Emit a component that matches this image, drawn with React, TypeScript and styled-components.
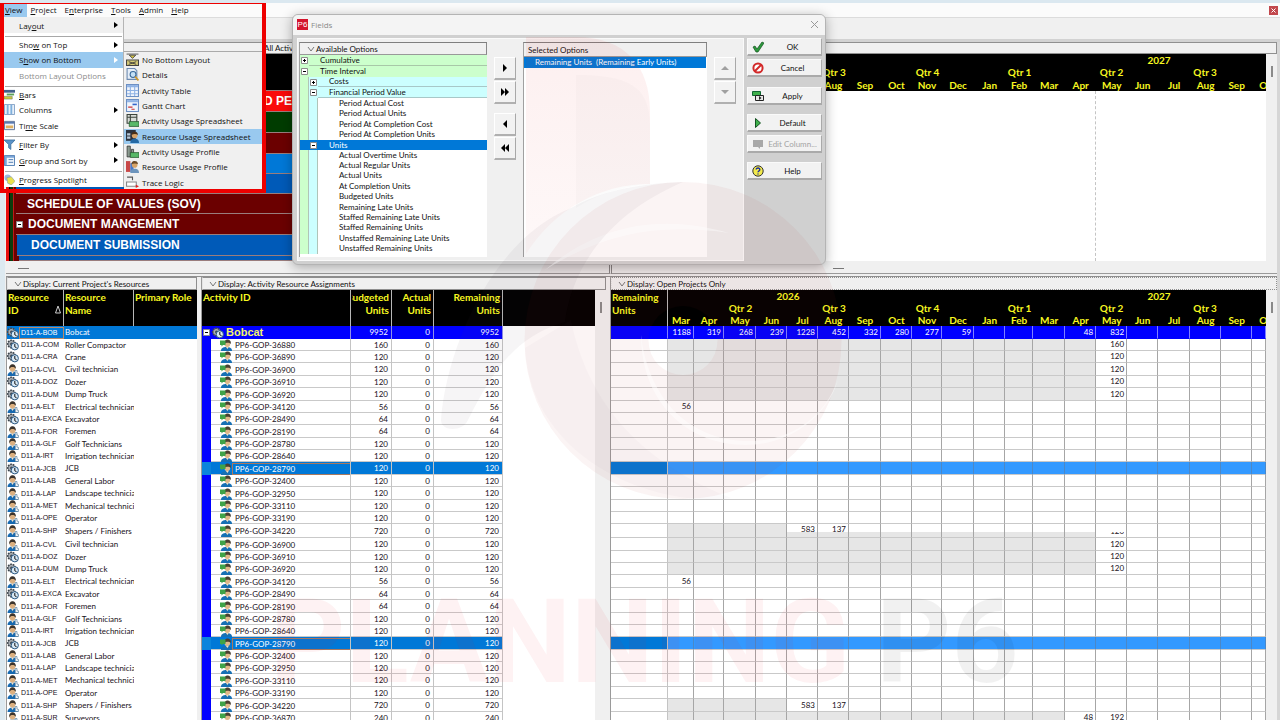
import React from 'react';
import styled, { createGlobalStyle, css } from 'styled-components';

const small = "Lato, 'Liberation Sans', sans-serif";
const ui = "'Open Sans', sans-serif";

const GlobalStyle = createGlobalStyle`
  * { box-sizing: border-box; }
  body { margin: 0; background: #f0f0f0; font-family: ${small}; font-size: 8px; color: #111; overflow: hidden; }
  button { font: inherit; color: inherit; border: 0; margin: 0; padding: 0; background: none; text-align: left; }
  ul { list-style: none; margin: 0; padding: 0; }
  table { border-collapse: separate; border-spacing: 0; table-layout: fixed; }
  th, td { padding: 0; }
  svg { display: block; flex: none; }
`;

/* ---------- window shell ---------- */

const Shell = styled.div`
  position: relative;
  display: flex;
  flex-direction: column;
  height: 100vh;
  overflow: hidden;
  border-top: 3px solid #dbe8f0;
`;

const MenuBar = styled.nav`
  display: flex;
  align-items: center;
  height: 15px;
  padding: 0 2px 0 4px;
  background: #fbfbfb;
  border-bottom: 1px solid #dcdcdc;
  font-family: ${ui};
  font-size: 8px;
  color: #111;
`;

const MenuTitle = styled.button<{ $open?: boolean }>`
  height: 14px;
  padding: 0 4px 1px 1px;
  margin-right: 3px;
  background: ${p => (p.$open ? '#99c9ef' : 'transparent')};
`;

const CloseSmall = styled.button`
  display: grid;
  place-items: center;
  width: 9px;
  height: 9px;
  margin-left: auto;
  background: #c2484d;
`;

const Toolbar = styled.div`
  flex: none;
  height: 24px;
  background: #f0f0f0;
  border-bottom: 3px solid #d2d2d2;
`;

const Work = styled.main`
  flex: 1;
  min-height: 0;
  display: flex;
  flex-direction: column;
  border-left: 5px solid #dde9f0;
  border-right: 3px solid #d6d6d6;
  padding-left: 1px;
`;

const PaneTitle = styled.div<{ $short?: boolean; $focus?: boolean }>`
  flex: none;
  display: flex;
  align-items: center;
  gap: 1px;
  height: ${p => (p.$short ? 12 : 13)}px;
  padding-left: 6px;
  background: #f0f0f0;
  border: 1px ${p => (p.$focus ? 'dotted' : 'solid')} #8f8f8f;
  border-left-color: #e4e4e4;
  white-space: nowrap;
`;

const UpperTitle = styled(PaneTitle)`
  padding-left: 257px;
`;

const Upper = styled.section`
  flex: none;
  display: flex;
  height: 207px;
`;

const Lower = styled.section`
  flex: 1;
  min-height: 0;
  display: flex;
  gap: 4px;
`;

const Splitter = styled.div`
  flex: none;
  display: flex;
  height: 16px;
  border-bottom: 1px solid #8f8f8f;
`;

const SplitLeft = styled.div`
  width: 606px;
  height: 13px;
  padding: 7px 0 0 12px;
  border-right: 3px double #888;
  border-bottom: 1px solid #9a9a9a;
`;

const SplitRight = styled.div`
  flex: 1;
  height: 13px;
  padding: 7px 0 0 221px;
  border-bottom: 1px solid #9a9a9a;
`;

const HThumb = styled.div`
  width: 11px;
  height: 1px;
  background: #777;
`;

const VScroll = styled.div`
  flex: none;
  width: 11px;
  padding: 12px 0 0 5px;
  background: #f0f0f0;
`;

const VThumb = styled.div`
  width: 2px;
  height: 11px;
  background: #8a8a8a;
`;

/* ---------- WBS bands ---------- */

const Wbs = styled.div`
  width: 601px;
  margin-right: 4px;
  display: flex;
  border-right: 1px solid #888;
`;

const Stripe = styled.div<{ $w: number; $c: string }>`
  flex: none;
  width: ${p => p.$w}px;
  background: ${p => p.$c};
`;

const Bands = styled.div`
  flex: 1;
  background: #6b0000;
`;

const Band = styled.div<{ $c: string; $h?: number; $indent?: number; $pad?: number }>`
  display: flex;
  align-items: center;
  gap: 5px;
  height: ${p => p.$h ?? 20}px;
  margin-left: ${p => p.$indent ?? 0}px;
  padding-left: ${p => p.$pad ?? 0}px;
  background: ${p => p.$c};
  border-bottom: 1px solid #9a7d7d;
  color: #fff;
  font: bold 12px/18px 'Liberation Sans', sans-serif;
  white-space: nowrap;
  overflow: hidden;
`;

/* ---------- tables ---------- */

const HeadCell = styled.th<{ $right?: boolean; $line?: boolean }>`
  height: 36px;
  padding: 1px 2px 0 1px;
  vertical-align: top;
  background: #000;
  color: #f8f820;
  font: bold 10px/13px ${small};
  text-align: ${p => (p.$right ? 'right' : 'left')};
  border-right: ${p => (p.$line === false ? 0 : 1)}px solid #b8b8b8;
  overflow: hidden;
`;

const HeadLines = styled.div<{ $right?: boolean }>`
  display: flex;
  flex-direction: column;
  align-items: ${p => (p.$right ? 'flex-end' : 'flex-start')};
  overflow: hidden;
  white-space: nowrap;
  span { display: flex; width: 100%; justify-content: ${p => (p.$right ? 'flex-end' : 'space-between')}; }
`;

const Row = styled.tr`
  height: 12px;
  &:nth-child(8n + 1), &:nth-child(8n + 4), &:nth-child(8n + 6) { height: 13px; }
  &:nth-child(17) { height: 14px; }
`;

const cell = css`
  line-height: 11px;
  white-space: nowrap;
  overflow: hidden;
`;

const ResCell = styled.td<{ $sel?: boolean }>`
  ${cell}
  background: ${p => (p.$sel ? '#0078d7' : '#fff')};
  color: ${p => (p.$sel ? '#fff' : '#181020')};
`;

const IdBox = styled.div<{ $focus?: boolean }>`
  display: flex;
  align-items: center;
  height: 12px;
  span {
    flex: 1;
    font: 7px/10px 'Liberation Sans', sans-serif;
    padding-left: 1px;
    border: 1px solid ${p => (p.$focus ? '#b98a6a' : 'transparent')};
    border-right-width: ${p => (p.$focus ? 1 : 0)}px;
  }
`;

const NameBox = styled.div`
  width: 70px;
  padding-left: 1px;
  overflow: hidden;
`;

const ActCell = styled.td<{ $tone?: 'sel' | 'group'; $first?: boolean }>`
  ${cell}
  text-align: ${p => (p.$first ? 'left' : 'right')};
  padding-right: ${p => (p.$first ? 0 : 3)}px;
  background: ${p => (p.$tone === 'sel' ? '#0078d7' : p.$tone === 'group' ? '#0000ff' : '#fff')};
  color: ${p => (p.$tone ? '#fff' : '#181020')};
  box-shadow: inset 0 -1px ${p => (p.$tone === 'group' ? '#0000ff' : '#c9c9c9')};
  border-left: ${p => (p.$first && p.$tone !== 'group' ? 9 : 0)}px solid ${p => (p.$tone === 'sel' ? '#0a84dc' : '#0000ff')};
  border-right: 1px solid ${p => (p.$tone === 'group' ? '#8f8fe8' : '#c4c4c4')};
`;

const ActBox = styled.div<{ $tone?: 'sel' | 'group' }>`
  display: flex;
  align-items: center;
  height: 11px;
  padding-left: ${p => (p.$tone === 'group' ? 1 : 9)}px;
  gap: ${p => (p.$tone === 'group' ? 2 : 1)}px;
  span { flex: 1; line-height: 10px; outline: ${p => (p.$tone === 'sel' ? '1px solid #a8795f' : 'none')}; padding-left: 2px; }
  b { font: bold 11px/11px 'Liberation Sans', sans-serif; color: #f4f46a; }
`;

const Pane = styled.div<{ $w?: number }>`
  flex: ${p => (p.$w ? 'none' : '1')};
  width: ${p => (p.$w ? `${p.$w}px` : 'auto')};
  min-width: 0;
  display: flex;
  flex-direction: column;
  background: #f0f0f0;
  border-left: 1px solid #9a9a9a;
`;

const PaneBody = styled.div`
  flex: 1;
  min-height: 0;
  display: flex;
  overflow: hidden;
`;

const White = styled.div`
  flex: 1;
  min-width: 0;
  background: #fff;
  overflow: hidden;
`;

const FullTable = styled.table`
  width: 100%;
`;

const BlackFill = styled.td`
  background: #000;
`;

/* ---------- timescale ---------- */

const ScaleCell = styled.th<{ $shift?: number; $tall?: boolean; $clip?: boolean }>`
  height: ${p => (p.$tall ? 13 : 12)}px;
  background: #000;
  color: #f8f820;
  font: bold 10px/12px ${small};
  text-align: ${p => (p.$clip ? 'left' : 'center')};
  padding-left: ${p => (p.$clip ? 7 : Math.max(p.$shift ?? 0, 0))}px;
  padding-right: ${p => Math.max(-(p.$shift ?? 0), 0)}px;
  overflow: hidden;
  white-space: nowrap;
`;

const Slot = styled.td<{ $bg?: string; $line?: string; $group?: boolean; $open?: boolean }>`
  ${cell}
  text-align: right;
  padding-right: 2px;
  background: ${p => p.$bg ?? '#fff'};
  color: ${p => (p.$group ? '#fff' : '#181020')};
  border-right: 1px solid ${p => p.$line ?? '#a6a6a6'};
  border-bottom: ${p => (p.$open ? 0 : 1)}px solid ${p => (p.$group ? '#0000ff' : '#c9c9c9')};
`;

const CutTop = styled.div`
  height: 8px;
  overflow: hidden;
`;

const CutBottom = styled.div`
  display: flex;
  align-items: flex-end;
  justify-content: flex-end;
  height: 5px;
  overflow: hidden;
`;

const CutRow = styled.tr<{ $h: number }>`
  height: ${p => p.$h}px;
`;

const Chart = styled.td<{ $today?: boolean }>`
  height: 170px;
  background: #fff;
  border-right: ${p => (p.$today ? '1px dashed #c4c4c4' : '0')};
`;

/* ---------- icons ---------- */

const Chevron = () => (
  <svg width="8" height="6" viewBox="0 0 8 6"><path d="M1 1l3 4 3-4" fill="none" stroke="#777" /></svg>
);
const Toggle = ({ open }: { open?: boolean }) => (
  <svg width="7" height="7" viewBox="0 0 7 7">
    <path d="M.5.5h6v6h-6z" fill="#fff" stroke="#8c8c8c" />
    <path d={open ? 'M2 3.5h3' : 'M2 3.5h3M3.5 2v3'} stroke="#000" />
  </svg>
);
const Labor = () => (
  <svg width="12" height="12" viewBox="0 0 12 12">
    <path d="M.5 12c0-3 2-4.500 5-4.500s5.500 1.500 5.500 4.500z" fill="#1769b0" />
    <path d="M4 7.500L5.500 10 7 7.500z" fill="#f4e4c8" />
    <circle cx="5.500" cy="4.500" r="2.900" fill="#dcb080" />
    <path d="M2.200 5.500C1.800 1.500 4 .2 5.500.2S9.200 1.400 8.900 5C8 3.500 7 3 5.500 3 4 3 3 3.500 2.200 5.500z" fill="#3c342c" />
    <path d="M8.200 6.500v5h3.300v-2l-1.500-.5V6.500z" fill="#eef3f8" stroke="#47708e" strokeWidth=".6" />
  </svg>
);
const Machine = () => (
  <svg width="12" height="12" viewBox="0 0 12 12">
    <circle cx="4.500" cy="5" r="3.700" fill="#a8aeb4" stroke="#3d454c" strokeWidth="1.600" strokeDasharray="1.800 .8" />
    <circle cx="4.500" cy="5" r="1.500" fill="#454d56" />
    <circle cx="7.800" cy="7.300" r="3.600" fill="#d8e8f4" stroke="#2c5a84" />
    <path d="M7.800 5v2.800l1.800 1" fill="none" stroke="#111" />
  </svg>
);
const Assign = () => (
  <svg width="12" height="12" viewBox="0 0 12 12">
    <path d="M1 12c0-3 2-4 5.500-4S12 9 12 12z" fill="#1670b4" />
    <path d="M5.500 7.500L7.500 10l1.500-2.500z" fill="#f0e0c0" />
    <circle cx="7.300" cy="5" r="2.900" fill="#e0b88a" />
    <path d="M4.300 5C4.300 1.200 6 .5 7.500.5s3.800 1 3.300 4.500C9.500 3.500 6.500 3 4.300 5z" fill="#4a4030" />
    <path d="M0 1.500h5.500V6H3L1.500 7.500V6H0z" fill="#3fa348" />
  </svg>
);
const Arrow = ({ c = '#000' }: { c?: string }) => (
  <svg width="4" height="6" viewBox="0 0 4 6"><path d="M0 0l4 3-4 3z" fill={c} /></svg>
);

const iconArt: Record<string, React.ReactNode> = {
  bars: <><path d="M0 1h12v3H0z" fill="#44608a" /><path d="M3 5h8v2H3z" fill="#5aa05a" /><path d="M0 8h9v3H0z" fill="#c8c83c" stroke="#666" strokeWidth=".5" /></>,
  columns: <><path d="M.5.5h11v11H.5z" fill="#e8f0fa" stroke="#7f9fc4" /><path d="M3 1h2v10H3zM7 1h2v10H7z" fill="#7fb0dc" /></>,
  time: <><path d="M.5 1.500h11v9H.5z" fill="#f2f4f8" stroke="#5a6f94" /><path d="M1 2h10v2H1z" fill="#5a7ab0" /><path d="M2 6h8v3H2z" fill="#e0b060" /></>,
  filter: <path d="M0 1h12L7.500 6v5.500L5 9.500V6z" fill="#5b93c8" stroke="#2e608f" strokeWidth=".7" />,
  group: <><path d="M.5.5h11v11H.5z" fill="#eef4fb" stroke="#4a78b0" /><path d="M1 1h10v2H1zM1 3h2v8H1z" fill="#78a4d8" /><path d="M5 5h5M5 8h5" stroke="#4a78b0" /></>,
  spot: <><circle cx="4" cy="4" r="3.500" fill="#9ab8dc" /><path d="M3 4l5-1 4 5-4 4-4-2z" fill="#e8e04c" stroke="#7a90a8" strokeWidth=".6" /></>,
  none: <><path d="M.5 1h11" stroke="#666" /><path d="M3 2h6L6 5z" stroke="#444" fill="#d0c040" strokeWidth=".8" /><path d="M.5 6.500h11v5H.5z" fill="#d8cc78" stroke="#444" /><path d="M2.500 8l7 2.500M9.500 8l-7 2.500" stroke="#333" strokeWidth=".8" /></>,
  details: <><path d="M1 .5h7l2 2v8H1z" fill="#e6eef8" stroke="#6c8ab0" /><circle cx="6.500" cy="6" r="2.700" fill="#c4e0f6" stroke="#3a6a9c" /><path d="M8.500 8l3 3.500" stroke="#d0982c" strokeWidth="1.600" /></>,
  table: <><path d="M.5.5h11v11H.5z" fill="#f0f5fc" stroke="#6d90c4" /><path d="M1 1h10v2H1z" fill="#8fb2e4" /><path d="M4 1v10M8 1v10M1 6h10M1 9h10" stroke="#8fb2e4" /></>,
  gantt: <><path d="M.5.5h11v11H.5z" fill="#f0f5fc" stroke="#6d90c4" /><path d="M1 1h10v2H1z" fill="#8fb2e4" /><path d="M6 5h4" stroke="#3366cc" strokeWidth="1.500" /><path d="M2 7.500h4M5 9.500h3" stroke="#c33" /></>,
  actsheet: <><path d="M1 .5h9v8H1z" fill="#d8dcd8" stroke="#3c443c" /><path d="M1 3h9M4 .5v8" stroke="#3c443c" /><path d="M3 7h9v4.500H3z" fill="#58b868" stroke="#285830" strokeWidth=".7" /></>,
  ressheet: <><path d="M0 0h9v10H0z" fill="#2c3440" /><path d="M1 3h3v2H1zM1 6h3v2H1z" fill="#b8c8d8" /><circle cx="8" cy="5" r="2.600" fill="#d8a468" /><path d="M5 4.500C5 2 7 1.500 8 1.500s3 .5 3 3C9.500 3.500 7 3.500 5 4.500z" fill="#4a3018" /><path d="M4 12c0-3 1.500-4 4-4s4 1 4 4z" fill="#2468a4" /></>,
  actprof: <><path d="M1 1h3v10H1zM5 4h2v5H5z" fill="#8a9a90" stroke="#333" strokeWidth=".7" /><path d="M4 7h8v4.500H4z" fill="#58b868" stroke="#285830" strokeWidth=".7" /></>,
  resprof: <><path d="M0 1h4v10H0z" fill="#c84848" /><path d="M4 3h3v8H4z" fill="#4878c8" /><circle cx="8" cy="4.500" r="2.600" fill="#d8a468" /><path d="M5 4C5 1.500 7 1 8 1s3 .5 3 3C9.500 3 7 3 5 4z" fill="#6a4a28" /><path d="M4 12c0-3 1.500-4 4-4s4 1 4 4z" fill="#6c94bc" /></>,
  trace: <><path d="M1 1h5v3" fill="none" stroke="#555" /><path d="M.5 5.500h9v4h-9z" fill="#fff" stroke="#888" /><path d="M9 8l3 1.500L9 11z" fill="#d22" /></>,
  ok: <path d="M1 6l2-1 2 3 5-7 2 1-6 9H4z" fill="#2c9a3c" stroke="#155020" strokeWidth=".7" />,
  cancel: <><circle cx="6" cy="6" r="4.600" fill="#fff" stroke="#d22828" strokeWidth="2" /><path d="M3 9l6-6" stroke="#d22828" strokeWidth="2" /></>,
  apply: <><path d="M.5 1.500h8v4h-8z" fill="#3fb04c" stroke="#163" /><path d="M3.500 5.500h8v5h-8z" fill="#e8e8e8" stroke="#222" /><path d="M7 6l2.500 2L7 10z" fill="#222" /></>,
  default: <path d="M3.500 1.500L8.500 6l-5 4.500z" fill="#3fb04c" stroke="#145222" />,
  edit: <path d="M1 2h10v7H8v2L6 9H1z" fill="#a8a8a8" />,
  help: <><circle cx="6" cy="6" r="5.200" fill="#f2ea4c" stroke="#333" /><path d="M4.200 4.600C4.200 2.400 8 2.500 7.800 4.700 7.700 6 6 6 6 7.300M6 8.500v1" fill="none" stroke="#1c2ca0" strokeWidth="1.400" /></>,
};
const Icon = ({ name, size = 12 }: { name: string; size?: number }) => (
  <svg width={size} height={size} viewBox="0 0 12 12">{iconArt[name]}</svg>
);

/* ---------- menus ---------- */

const Drop = styled.div`
  position: absolute;
  z-index: 4;
  left: 4px;
  top: 14px;
  width: 120px;
  background: #fff;
  border-right: 1px solid #b4b4b4;
  font-family: ${ui};
  font-size: 8px;
  color: #111;
`;

const Fly = styled(Drop)`
  left: 124px;
  top: 48px;
  width: 138px;
  height: 139px;
  overflow: hidden;
  background: #f0f0f0;
  border: 0;
  border-top: 1px solid #aaa;
`;

const Group = styled.ul<{ $h: number; $shade?: boolean }>`
  display: grid;
  grid-auto-rows: 1fr;
  height: ${p => p.$h}px;
  background: ${p => (p.$shade ? '#f0f0f0' : 'transparent')};
  & + & { margin-top: 4px; box-shadow: 0 -2px 0 -1px #a8a8a8; }
`;

const Item = styled.button<{ $hot?: boolean; $off?: boolean }>`
  display: flex;
  align-items: center;
  width: 100%;
  height: 100%;
  padding-right: 5px;
  background: ${p => (p.$hot ? '#99c9ef' : 'transparent')};
  color: ${p => (p.$off ? '#8c8c8c' : 'inherit')};
  white-space: nowrap;
`;

const Gutter = styled.span<{ $w: number }>`
  display: flex;
  width: ${p => p.$w}px;
  flex: none;
`;

const Label = styled.span`
  flex: 1;
`;

const RedFrame = styled.div`
  position: absolute;
  z-index: 5;
  left: 0;
  top: -3px;
  width: 266px;
  height: 193px;
  border: 4px solid #ee0000;
  pointer-events: none;
`;

type MenuEntry = { t: React.ReactNode; icon?: string; sub?: boolean; hot?: boolean; off?: boolean };
const menu: { h: number; shade?: boolean; items: MenuEntry[] }[] = [
  { h: 16, shade: true, items: [{ t: <>Lay<u>o</u>ut</>, sub: true }] },
  { h: 46, items: [{ t: <>Sho<u>w</u> on Top</>, sub: true }, { t: <>S<u>h</u>ow on Bottom</>, sub: true, hot: true }, { t: 'Bottom Layout Options', off: true }] },
  { h: 46, items: [{ t: <><u>B</u>ars</>, icon: 'bars' }, { t: 'Columns', icon: 'columns', sub: true }, { t: <>Ti<u>m</u>e Scale</>, icon: 'time' }] },
  { h: 31, items: [{ t: <><u>F</u>ilter By</>, icon: 'filter', sub: true }, { t: <><u>G</u>roup and Sort by</>, icon: 'group', sub: true }] },
  { h: 15, items: [{ t: <><u>P</u>rogress Spotlight</>, icon: 'spot' }] },
];
const flyout: MenuEntry[] = [
  { t: 'No Bottom Layout', icon: 'none' }, { t: 'Details', icon: 'details' }, { t: 'Activity Table', icon: 'table' },
  { t: 'Gantt Chart', icon: 'gantt' }, { t: 'Activity Usage Spreadsheet', icon: 'actsheet' },
  { t: 'Resource Usage Spreadsheet', icon: 'ressheet', hot: true }, { t: 'Activity Usage Profile', icon: 'actprof' },
  { t: 'Resource Usage Profile', icon: 'resprof' }, { t: 'Trace Logic', icon: 'trace' },
];

/* ---------- dialog ---------- */

const Dialog = styled.div`
  position: absolute;
  z-index: 2;
  left: 292px;
  top: 11px;
  width: 534px;
  height: 251px;
  display: flex;
  flex-direction: column;
  background: #d0d0d0;
  border: 1px solid #b4b4b4;
  border-radius: 6px;
  box-shadow: 0 2px 12px rgba(0, 0, 0, 0.3);
  overflow: hidden;
`;

const DialogTitle = styled.header`
  flex: none;
  display: flex;
  align-items: center;
  gap: 3px;
  height: 20px;
  padding: 0 6px 1px 4px;
  background: #f4f4f4;
  color: #8a8a8a;
  font-family: ${ui};
  font-size: 8px;
`;

const Badge = styled.span`
  width: 11px;
  height: 11px;
  background: #d4142c;
  color: #fff;
  font: 8px/11px 'Liberation Sans', sans-serif;
  text-align: center;
`;

const CloseButton = styled.button`
  margin-left: auto;
`;

const DialogBody = styled.div`
  flex: 1;
  display: flex;
  gap: 3px;
  padding: 3px 3px 3px 4px;
`;

const Picker = styled.div`
  flex: 1;
  display: flex;
  gap: 7px;
  padding: 3px 7px 3px 1px;
  background: #f0f0f0;
  border: 1px solid #fafafa;
`;

const List = styled.div<{ $w: number }>`
  width: ${p => p.$w}px;
  background: #fff;
  border-top: 1px solid #7f7f7f;
  border-left: 1px solid #a0a0a0;
`;

const ListHead = styled.div<{ $h: number }>`
  display: flex;
  align-items: center;
  gap: 1px;
  height: ${p => p.$h}px;
  padding-left: ${p => (p.$h > 12 ? 4 : 7)}px;
  background: #f0f0f0;
  border-right: 1px solid #888;
  border-bottom: 1px solid #999;
`;

const TreeRow = styled.div<{ $h?: number; $bg?: string; $sel?: boolean }>`
  display: flex;
  height: ${p => (p.$h ? `${p.$h}px` : 'auto')};
  color: ${p => (p.$sel ? '#fff' : 'inherit')};
  background: ${p => p.$bg ?? 'transparent'};
  white-space: nowrap;
`;

const Rail = styled.span<{ $c: string; $line?: boolean }>`
  flex: none;
  display: grid;
  place-items: center;
  width: 9px;
  background: ${p => p.$c};
  border-right: ${p => (p.$line ? 1 : 0)}px solid #b0c4b8;
`;

const TreeLabel = styled.span<{ $pad: number; $line?: string }>`
  flex: 1;
  display: flex;
  align-items: center;
  padding-left: ${p => p.$pad}px;
  line-height: 9px;
  border-bottom: ${p => (p.$line ? `1px solid ${p.$line}` : '0')};
`;

const Leaves = styled.div<{ $h: number }>`
  display: grid;
  grid-auto-rows: 1fr;
  height: ${p => p.$h}px;
`;

const Stack = styled.div`
  width: 22px;
  display: flex;
  flex-direction: column;
  gap: 1px;
  padding-top: 15px;
`;

const Key = styled.button<{ $after?: number }>`
  display: grid;
  place-items: center;
  width: 22px;
  height: 23px;
  margin-bottom: ${p => p.$after ?? 0}px;
  background: #f2f2f2;
  border: 1px solid #fff;
  border-right: 1px solid #a8a8a8;
  border-bottom: 2px solid #b0b0b0;
`;

const Chosen = styled.div`
  height: 11px;
  padding-left: 11px;
  margin-right: 1px;
  line-height: 11px;
  background: #0078d7;
  color: #fff;
  white-space: pre;
`;

const Actions = styled.div`
  width: 75px;
  display: flex;
  flex-direction: column;
`;

const Action = styled.button<{ $gap: number; $off?: boolean }>`
  display: flex;
  align-items: center;
  height: 18px;
  margin-bottom: ${p => p.$gap}px;
  padding: 0 0 0 4px;
  background: #f2f2f2;
  border: 1px solid #fafafa;
  border-right-color: #aaa;
  border-bottom: 2px solid #aaa;
  color: ${p => (p.$off ? '#a4a4a4' : '#111')};
  span { flex: 1; text-align: center; white-space: nowrap; }
`;

/* ---------- watermark ---------- */

const Watermark = styled.div`
  position: absolute;
  z-index: 3;
  inset: -3px 0 0 0;
  overflow: hidden;
  pointer-events: none;
`;

const Brand = styled.div`
  position: absolute;
  left: 270px;
  top: 567px;
  display: flex;
  gap: 26px;
  color: rgba(240, 20, 30, 0.055);
  font: bold 117px/150px Roboto, sans-serif;
  white-space: nowrap;
  span { color: rgba(0, 0, 0, 0.055); }
`;

/* ---------- data ---------- */

const months = ['Mar', 'Apr', 'May', 'Jun', 'Jul', 'Aug', 'Sep', 'Oct', 'Nov', 'Dec', 'Jan', 'Feb', 'Mar', 'Apr', 'May', 'Jun', 'Jul', 'Aug', 'Sep', 'Oct'];
const widths = [26, 30, 32, 31, 31, 31, 32, 31, 30, 32, 31, 28, 32, 31, 31, 31, 32, 31, 31];
const quarters: [string, number][] = [['', 1], ['Qtr 2', 3], ['Qtr 3', 3], ['Qtr 4', 3], ['Qtr 1', 3], ['Qtr 2', 3], ['Qtr 3', 3], ['', 1]];

type Res = [string, string, boolean?];
const people: Res[] = [
  ['CVL', 'Civil technician'], ['DOZ', 'Dozer', true], ['DUM', 'Dump Truck', true], ['ELT', 'Electrical technician'],
  ['EXCA', 'Excavator', true], ['FOR', 'Foremen'], ['GLF', 'Golf Technicians'], ['IRT', 'Irrigation technician'],
  ['JCB', 'JCB', true], ['LAB', 'General Labor'], ['LAP', 'Landscape technicia'], ['MET', 'Mechanical technici'],
  ['OPE', 'Operator'], ['SHP', 'Shapers / Finishers'],
];
const resources: Res[][] = [
  [['BOB', 'Bobcat', true], ['COM', 'Roller Compactor', true], ['CRA', 'Crane', true], ...people],
  [...people, ['SUR', 'Surveyors']],
];

type Usage = { id: string; units: number; at?: Record<number, number>; grey?: number; group?: boolean; cut?: boolean };
const common: Usage[] = [
  { id: '36900', units: 120, grey: 14, at: { 14: 120 } }, { id: '36910', units: 120, grey: 14, at: { 14: 120 } },
  { id: '36920', units: 120, grey: 14, at: { 14: 120 } }, { id: '34120', units: 56, at: { 0: 56 } },
  { id: '28490', units: 64 }, { id: '28190', units: 64 }, { id: '28780', units: 120 }, { id: '28640', units: 120 },
  { id: '28790', units: 120 }, { id: '32400', units: 120 }, { id: '32950', units: 120 }, { id: '33110', units: 120 },
  { id: '33190', units: 120 },
];
const shapers: Usage = { id: '34220', units: 720, grey: 4, at: { 4: 583, 5: 137 } };
const work: Usage[][] = [
  [
    { id: 'Bobcat', units: 9952, group: true, at: { 0: 1188, 1: 319, 2: 268, 3: 239, 4: 1228, 5: 452, 6: 332, 7: 280, 8: 277, 9: 59, 13: 48, 14: 832 } },
    { id: '36880', units: 160, grey: 14, at: { 14: 160 } }, { id: '36890', units: 120, grey: 14, at: { 14: 120 } },
    ...common, { ...shapers, cut: true },
  ],
  [...common, shapers, { id: '36870', units: 240, grey: 13, at: { 13: 48, 14: 192 } }],
];

const Timescale = ({ label }: { label?: boolean }) => (
  <>
    <colgroup>
      <col style={{ width: 57 }} />
      {widths.map((w, i) => <col key={i} style={{ width: w }} />)}
      <col />
    </colgroup>
    <thead>
      <tr>
        <HeadCell rowSpan={3} $line={!!label}>{label && <>Remaining<br />Units</>}</HeadCell>
        <ScaleCell colSpan={10} $shift={-66}>2026</ScaleCell>
        <ScaleCell colSpan={10} $shift={78}>2027</ScaleCell>
      </tr>
      <tr>{quarters.map(([q, n], i) => <ScaleCell key={i} colSpan={n}>{q}</ScaleCell>)}</tr>
      <tr>{months.map((m, i) => <ScaleCell key={i} $tall={!label} $clip={i === 19}>{m}</ScaleCell>)}</tr>
    </thead>
  </>
);

const UsageRow = ({ w }: { w: Usage }) => {
  const sel = w.id === '28790';
  const bg = (i: number, grey = w.grey ?? 0) => (w.group ? '#0000ff' : sel ? '#3399ff' : i < grey ? '#e6e6e6' : '#fff');
  const line = w.group ? '#8080ff' : sel ? '#4a88c8' : undefined;
  if (w.cut) {
    return (
      <>
        <CutRow $h={8}>
          <Slot $open $line="#c4c4c4" />
          {months.map((_, i) => <Slot key={i} $open $bg={bg(i)}><CutTop>{w.at?.[i]}</CutTop></Slot>)}
        </CutRow>
        <CutRow $h={6}>
          <Slot $line="#c4c4c4" />
          {months.map((_, i) => <Slot key={i} $bg={bg(i, 14)}><CutBottom>{i === 14 ? 120 : ''}</CutBottom></Slot>)}
        </CutRow>
      </>
    );
  }
  return (
    <Row>
      <Slot $bg={w.group ? '#0000ff' : sel ? '#0078d7' : '#fff'} $group={w.group} $line={w.group ? '#8080ff' : '#c4c4c4'} />
      {months.map((_, i) => <Slot key={i} $bg={bg(i)} $group={w.group} $line={line}>{w.at?.[i]}</Slot>)}
    </Row>
  );
};

const Leaf = ({ items, h }: { items: string[]; h: number }) => (
  <Leaves $h={h}>
    {items.map(t => (
      <TreeRow key={t}><Rail $c="#ccffcc" $line /><Rail $c="#ccffff" $line /><TreeLabel $pad={21}>{t}</TreeLabel></TreeRow>
    ))}
  </Leaves>
);

const Glyph = ({ d, c = '#000' }: { d: string; c?: string }) => (
  <svg width="10" height="10" viewBox="0 0 10 10"><path d={d} fill={c} /></svg>
);

export default function App() {
  return (
    <Shell>
      <GlobalStyle />
      <MenuBar>
        <MenuTitle $open><u>V</u>iew</MenuTitle>
        <MenuTitle><u>P</u>roject</MenuTitle>
        <MenuTitle>E<u>n</u>terprise</MenuTitle>
        <MenuTitle><u>T</u>ools</MenuTitle>
        <MenuTitle><u>A</u>dmin</MenuTitle>
        <MenuTitle><u>H</u>elp</MenuTitle>
        <CloseSmall aria-label="Close"><svg width="5" height="5" viewBox="0 0 5 5"><path d="M.5.5l4 4M4.500.5l-4 4" stroke="#fff" /></svg></CloseSmall>
      </MenuBar>
      <Toolbar />
      <Work>
        <UpperTitle $short>All Activities</UpperTitle>
        <Upper>
          <Wbs>
            <Stripe $w={3} $c="#e81010" /><Stripe $w={1} $c="#000" /><Stripe $w={3} $c="#0c3c0c" /><Stripe $w={1} $c="#c01818" /><Stripe $w={2} $c="#6b0000" />
            <Bands>
              <Band $c="#000" $h={37} />
              <Band $c="#fa0a0a" $h={21} $pad={248}>D PE</Band>
              <Band $c="#003c00" $h={21} />
              <Band $c="#6b0000" $h={21} />
              <Band $c="#0078d7" />
              <Band $c="#005ab8" />
              <Band $c="#6b0000" $pad={11}>SCHEDULE OF VALUES (SOV)</Band>
              <Band $c="#6b0000" $h={21} $pad={-1}><Toggle open />DOCUMENT MANGEMENT</Band>
              <Band $c="#005ab8" $h={21} $indent={1} $pad={14}>DOCUMENT SUBMISSION</Band>
              <Band $c="#005ab8" $h={5} $indent={3} />
            </Bands>
          </Wbs>
          <White>
            <FullTable>
              <Timescale />
              <tbody><tr><Chart />{months.map((_, i) => <Chart key={i} $today={i === 13} />)}</tr></tbody>
            </FullTable>
          </White>
          <VScroll><VThumb /></VScroll>
        </Upper>
        <Splitter>
          <SplitLeft><HThumb /></SplitLeft>
          <SplitRight><HThumb /></SplitRight>
        </Splitter>
        <Lower>
          <Pane $w={191}>
            <PaneTitle><Chevron />Display: Current Project's Resources</PaneTitle>
            <PaneBody>
              <White>
                <FullTable>
                  <colgroup><col style={{ width: 57 }} /><col style={{ width: 70 }} /><col /></colgroup>
                  <thead>
                    <tr>
                      <HeadCell><HeadLines>Resource<span>ID<svg width="6" height="10" viewBox="0 0 6 10"><path d="M3 2l2.500 7h-5z" fill="none" stroke="#ccc" /></svg></span></HeadLines></HeadCell>
                      <HeadCell>Resource<br />Name</HeadCell>
                      <HeadCell $line={false}><HeadLines>Primary Role</HeadLines></HeadCell>
                    </tr>
                  </thead>
                  {resources.map((block, b) => (
                    <tbody key={b}>
                      {block.map(([id, name, machine]) => {
                        const sel = id === 'BOB';
                        return (
                          <Row key={id}>
                            <ResCell $sel={sel}><IdBox $focus={sel}>{machine ? <Machine /> : <Labor />}<span>D11-A-{id}</span></IdBox></ResCell>
                            <ResCell $sel={sel}><NameBox>{name}</NameBox></ResCell>
                            <ResCell $sel={sel} />
                          </Row>
                        );
                      })}
                    </tbody>
                  ))}
                </FullTable>
              </White>
            </PaneBody>
          </Pane>
          <Pane $w={405}>
            <PaneTitle><Chevron />Display: Activity Resource Assignments</PaneTitle>
            <PaneBody>
              <White>
                <FullTable>
                  <colgroup><col style={{ width: 149 }} /><col style={{ width: 41 }} /><col style={{ width: 42 }} /><col style={{ width: 69 }} /><col /></colgroup>
                  <thead>
                    <tr>
                      <HeadCell>Activity ID</HeadCell>
                      <HeadCell><HeadLines $right><span>Budgeted</span><span>Units</span></HeadLines></HeadCell>
                      <HeadCell $right>Actual<br />Units</HeadCell>
                      <HeadCell $right>Remaining<br />Units</HeadCell>
                      <BlackFill />
                    </tr>
                  </thead>
                  {work.map((block, b) => (
                    <tbody key={b}>
                      {block.map(w => {
                        const tone = w.group ? 'group' : w.id === '28790' ? 'sel' : undefined;
                        return (
                          <Row key={w.id}>
                            <ActCell $tone={tone} $first>
                              {w.group
                                ? <ActBox $tone="group"><Toggle open /><Machine /><b>{w.id}</b></ActBox>
                                : <ActBox $tone={tone}><Assign /><span>PP6-GOP-{w.id}</span></ActBox>}
                            </ActCell>
                            <ActCell $tone={tone}>{w.units}</ActCell>
                            <ActCell $tone={tone}>0</ActCell>
                            <ActCell $tone={tone}>{w.units}</ActCell>
                            <td />
                          </Row>
                        );
                      })}
                    </tbody>
                  ))}
                </FullTable>
              </White>
              <VScroll><VThumb /></VScroll>
            </PaneBody>
          </Pane>
          <Pane>
            <PaneTitle $focus><Chevron />Display: Open Projects Only</PaneTitle>
            <PaneBody>
              <White>
                <FullTable>
                  <Timescale label />
                  {work.map((block, b) => <tbody key={b}>{block.map(w => <UsageRow key={w.id} w={w} />)}</tbody>)}
                </FullTable>
              </White>
              <VScroll><VThumb /></VScroll>
            </PaneBody>
          </Pane>
        </Lower>
      </Work>

      <Dialog role="dialog" aria-label="Fields">
        <DialogTitle>
          <Badge>P6</Badge>Fields
          <CloseButton aria-label="Close dialog"><svg width="9" height="9" viewBox="0 0 9 9"><path d="M1 1l7 7M8 1l-7 7" stroke="#999" /></svg></CloseButton>
        </DialogTitle>
        <DialogBody>
          <Picker>
            <List $w={188}>
              <ListHead $h={12}><Chevron />Available Options</ListHead>
              <TreeRow $h={11} $bg="#ccffcc"><Rail $c="#ccffcc"><Toggle /></Rail><TreeLabel $pad={11} $line="#a8c8a8">Cumulative</TreeLabel></TreeRow>
              <TreeRow $h={11} $bg="#ccffcc"><Rail $c="#ccffcc"><Toggle open /></Rail><TreeLabel $pad={11}>Time Interval</TreeLabel></TreeRow>
              <TreeRow $h={10} $bg="#ccffff"><Rail $c="#ccffcc" $line /><Rail $c="#ccffff"><Toggle /></Rail><TreeLabel $pad={11} $line="#a8c8c8">Costs</TreeLabel></TreeRow>
              <TreeRow $h={11} $bg="#ccffff"><Rail $c="#ccffcc" $line /><Rail $c="#ccffff"><Toggle open /></Rail><TreeLabel $pad={11} $line="#a8c8c8">Financial Period Value</TreeLabel></TreeRow>
              <Leaf h={42} items={['Period Actual Cost', 'Period Actual Units', 'Period At Completion Cost', 'Period At Completion Units']} />
              <TreeRow $h={10} $bg="#0078d7" $sel><Rail $c="#0078d7" /><Rail $c="#0078d7"><Toggle open /></Rail><TreeLabel $pad={11}>Units</TreeLabel></TreeRow>
              <Leaf h={104} items={['Actual Overtime Units', 'Actual Regular Units', 'Actual Units', 'At Completion Units', 'Budgeted Units', 'Remaining Late Units', 'Staffed Remaining Late Units', 'Staffed Remaining Units', 'Unstaffed Remaining Late Units', 'Unstaffed Remaining Units']} />
            </List>
            <Stack>
              <Key aria-label="Add"><Glyph d="M3 1l4 4-4 4z" /></Key>
              <Key $after={8} aria-label="Add all"><Glyph d="M1 1l4 4-4 4zM5 1l4 4-4 4z" /></Key>
              <Key aria-label="Remove"><Glyph d="M7 1L3 5l4 4z" /></Key>
              <Key aria-label="Remove all"><Glyph d="M5 1L1 5l4 4zM9 1L5 5l4 4z" /></Key>
            </Stack>
            <List $w={184}>
              <ListHead $h={14}>Selected Options</ListHead>
              <Chosen>{'Remaining Units  (Remaining Early Units)'}</Chosen>
            </List>
            <Stack>
              <Key aria-label="Move up"><Glyph d="M1 7l4-4 4 4z" c="#a0a0a0" /></Key>
              <Key aria-label="Move down"><Glyph d="M1 3l4 4 4-4z" c="#a0a0a0" /></Key>
            </Stack>
          </Picker>
          <Actions>
            <Action $gap={3}><Icon name="ok" /><span>OK</span></Action>
            <Action $gap={10}><Icon name="cancel" /><span>Cancel</span></Action>
            <Action $gap={9}><Icon name="apply" /><span>Apply</span></Action>
            <Action $gap={3}><Icon name="default" /><span>Default</span></Action>
            <Action $gap={9} $off disabled><Icon name="edit" /><span>Edit Column...</span></Action>
            <Action $gap={0}><Icon name="help" /><span>Help</span></Action>
          </Actions>
        </DialogBody>
      </Dialog>

      <Watermark aria-hidden="true">
        <svg width="1280" height="720" viewBox="0 0 1280 720">
          <defs>
            <linearGradient id="stem" x1="0" y1="0" x2="0" y2="1">
              <stop offset="0" stopColor="#e02020" stopOpacity=".07" />
              <stop offset="1" stopColor="#e02020" stopOpacity=".03" />
            </linearGradient>
          </defs>
          <path d="M526 37h50c50 0 74 30 74 74v73c-50 0-95 25-124 70z" fill="url(#stem)" />
          <path d="M576 75c50 0 74 10 74 50v59c-30 3-52 10-74 24z" fill="#888" opacity=".03" />
          <path fillRule="evenodd" d="M683 182a158 158 0 1 1 0 317 158 158 0 0 1 0-317zM683 306a34 34 0 1 0 0 69 34 34 0 0 0 0-69z" fill="#b02020" opacity=".05" />
          <path d="M641 335c0 66 45 110 105 110 40 0 80-25 92-65-16 42-52 62-92 61-60-2-98-45-105-106z" fill="#fff" opacity=".45" />
          <path d="M545 270c50-42 110-58 184-37-70-10-125 0-184 37z" fill="#fff" opacity=".4" />
          <path d="M441 420c5-70 50-180 130-212 30-16 60-24 112-26-70 30-110 80-118 140-50 15-72 48-97 98-5 12-27 12-27 0z" fill="#504050" opacity=".05" />
          <path d="M571 320c20 100 90 150 160 178-80 10-200-40-206-150z" fill="#806070" opacity=".03" />
        </svg>
        <Brand>PLANNING<span>P6</span></Brand>
      </Watermark>

      <Drop>
        {menu.map((g, i) => (
          <Group key={i} $h={g.h} $shade={g.shade}>
            {g.items.map((m, k) => (
              <li key={k}>
                <Item $hot={m.hot} $off={m.off} disabled={m.off}>
                  <Gutter $w={15}>{m.icon && <Icon name={m.icon} size={11} />}</Gutter>
                  <Label>{m.t}</Label>
                  {m.sub && <Arrow c={m.hot ? '#fff' : '#000'} />}
                </Item>
              </li>
            ))}
          </Group>
        ))}
      </Drop>
      <Fly>
        <Group $h={138}>
          {flyout.map((m, k) => (
            <li key={k}><Item $hot={m.hot}><Gutter $w={18}><Gutter $w={2} /><Icon name={m.icon!} size={13} /></Gutter><Label>{m.t}</Label></Item></li>
          ))}
        </Group>
      </Fly>
      <RedFrame />
    </Shell>
  );
}
